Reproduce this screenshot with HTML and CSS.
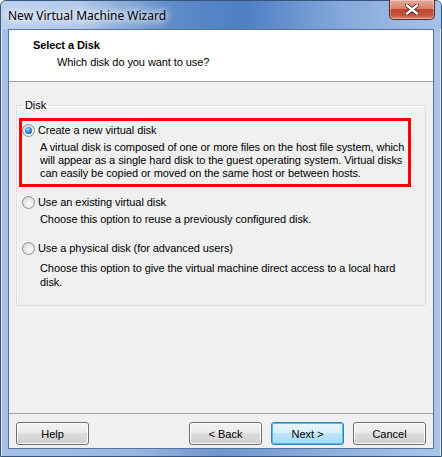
FILE: index.html
```html
<!DOCTYPE html>
<html lang="en">
<head>
  <meta charset="UTF-8" />
  <title>New Virtual Machine Wizard</title>
  <link rel="stylesheet" href="styles.css">
</head>
<body>
  <div class="window">
    <div class="titlebar">
      <span class="title">New Virtual Machine Wizard</span>
      <button class="close" aria-label="Close">
        <svg width="14" height="11" viewBox="0 0 14 11">
          <path d="M2 1.5 L12 9.5 M12 1.5 L2 9.5" stroke="#3a1a14" stroke-width="4" stroke-linecap="square"/>
          <path d="M2 1.5 L12 9.5 M12 1.5 L2 9.5" stroke="#fff" stroke-width="2.4" stroke-linecap="square"/>
        </svg>
      </button>
    </div>

    <div class="client">
      <div class="header">
        <div class="header-title">Select a Disk</div>
        <div class="header-sub">Which disk do you want to use?</div>
      </div>

      <div class="body">
        <fieldset class="group">
          <legend>Disk</legend>

          <div class="option highlight">
            <label class="option-label"><span class="radio checked"></span>Create a new virtual disk</label>
            <p class="option-desc">A virtual disk is composed of one or more files on the host file system, which will appear as a single hard disk to the guest operating system. Virtual disks can easily be copied or moved on the same host or between hosts.</p>
          </div>

          <div class="option">
            <label class="option-label"><span class="radio"></span>Use an existing virtual disk</label>
            <p class="option-desc">Choose this option to reuse a previously configured disk.</p>
          </div>

          <div class="option">
            <label class="option-label"><span class="radio"></span>Use a physical disk (for advanced users)</label>
            <p class="option-desc">Choose this option to give the virtual machine direct access to a local hard disk.</p>
          </div>
        </fieldset>
      </div>

      <div class="footer">
        <button class="btn">Help</button>
        <div class="spacer"></div>
        <button class="btn">&lt; Back</button>
        <button class="btn default">Next &gt;</button>
        <button class="btn">Cancel</button>
      </div>
    </div>
  </div>
</body>
</html>
```

FILE: styles.css
```css
html, body {
  margin: 0;
  padding: 0;
}
body {
  width: 442px;
  height: 457px;
  font-family: "Liberation Sans", Arial, sans-serif;
  font-size: 11px;
  letter-spacing: -0.08px;
  color: #000;
  background: #fff;
}
.window {
  box-sizing: border-box;
  width: 442px;
  height: 457px;
  display: flex;
  flex-direction: column;
  border: 1px solid #35557d;
  border-radius: 6px 6px 0 0;
  background: linear-gradient(to right, #a5c1e6 0%, #98b6e0 30%, #6f96cf 50%, #8eb0de 75%, #a9c5ea 100%);
  box-shadow: inset 1px 1px 0 #e6eef9, inset -1px 0 0 #e6eef9;
}
.titlebar {
  height: 28px;
  display: flex;
  align-items: flex-start;
  background: linear-gradient(to right, #bcd1ee 0%, #b0c8ea 18%, #5f8cca 38%, #4e7ec4 55%, #86a9db 78%, #a7c2e8 100%);
  border-radius: 6px 6px 0 0;
}
.title {
  font-family: "Segoe UI", "Noto Sans", "DejaVu Sans", sans-serif;
  font-size: 12px;
  letter-spacing: 0;
  padding: 6px 0 0 7px;
  color: #000;
  text-shadow: 0 0 6px #fff, 0 0 10px #fff, 0 0 14px #fff;
}
.close {
  margin-left: auto;
  margin-right: 6px;
  width: 46px;
  height: 20px;
  margin-top: -1px;
  padding: 0;
  border: 1px solid #5a2a22;
  border-top: none;
  border-radius: 0 0 5px 5px;
  background: linear-gradient(to bottom, #e7a99b 0%, #d7826d 45%, #c0462c 50%, #c7513a 80%, #de8a70 100%);
  box-shadow: inset 0 0 0 1px rgba(255, 255, 255, 0.35);
  display: flex;
  align-items: center;
  justify-content: center;
}
.client {
  flex: 1;
  margin: 0 7px 7px 7px;
  display: flex;
  flex-direction: column;
  background: #f0f0f0;
  border: 1px solid #54739d;
}
.header {
  height: 52px;
  background: #fff;
  border-bottom: 1px solid #a0a0a0;
  box-sizing: border-box;
  padding: 8px 0 0 24px;
}
.header-title {
  font-weight: bold;
  line-height: 14px;
}
.header-sub {
  padding-left: 24px;
  margin-top: 3px;
  line-height: 14px;
}
.body {
  flex: 1;
  padding: 17px 7px 0 7px;
}
.group {
  margin: 0;
  padding: 6px 14px 9px 2px;
  border: 1px solid #d5dfe5;
  border-radius: 3px;
  box-shadow: inset 1px 1px 0 #fff;
}
.group legend {
  padding: 0 2px;
  margin-left: 4px;
  line-height: 13px;
}
.option {
  border: 3px solid transparent;
  padding: 2px 1px 4px 0;
  margin-bottom: 3px;
}
.option:last-child {
  margin-bottom: 0;
}
.option:last-child .option-desc {
  margin-top: 6px;
  line-height: 14px;
}
.option.highlight {
  border-color: #ff0000;
}
.option-label {
  display: flex;
  align-items: center;
  line-height: 14px;
}
.option-desc {
  margin: 4px 0 0 18px;
  line-height: 13px;
}
.radio {
  box-sizing: border-box;
  width: 13px;
  height: 13px;
  border-radius: 50%;
  border: 1px solid #8e8f8f;
  background: radial-gradient(circle at 60% 65%, #fdfdfd 0%, #e8e8e8 50%, #c9c9c9 100%);
  margin-right: 3px;
  position: relative;
}
.radio.checked::after {
  content: "";
  position: absolute;
  left: 2px;
  top: 2px;
  width: 7px;
  height: 7px;
  border-radius: 50%;
  background: radial-gradient(circle at 40% 35%, #a8e2ff 0%, #2b8ce0 45%, #0b3d83 100%);
}
.footer {
  box-sizing: border-box;
  height: 35px;
  border-top: 1px solid #a0a0a0;
  display: flex;
  align-items: flex-start;
  padding: 8px 7px 0 7px;
  gap: 9px;
}
.spacer {
  flex: 1;
}
.btn {
  width: 73px;
  height: 23px;
  padding: 0;
  font-family: inherit;
  font-size: 11px;
  color: #000;
  border: 1px solid #707070;
  border-radius: 3px;
  background: linear-gradient(to bottom, #f2f2f2 0%, #ebebeb 45%, #dddddd 50%, #cfcfcf 100%);
  box-shadow: inset 0 0 0 1px #fcfcfc;
}
.btn.default {
  border-color: #3c7fb1;
  background: linear-gradient(to bottom, #eaf6fd 0%, #d9f0fc 45%, #bee6fd 50%, #a7d9f5 100%);
  box-shadow: inset 0 0 0 1px #48c1f0;
}
```
